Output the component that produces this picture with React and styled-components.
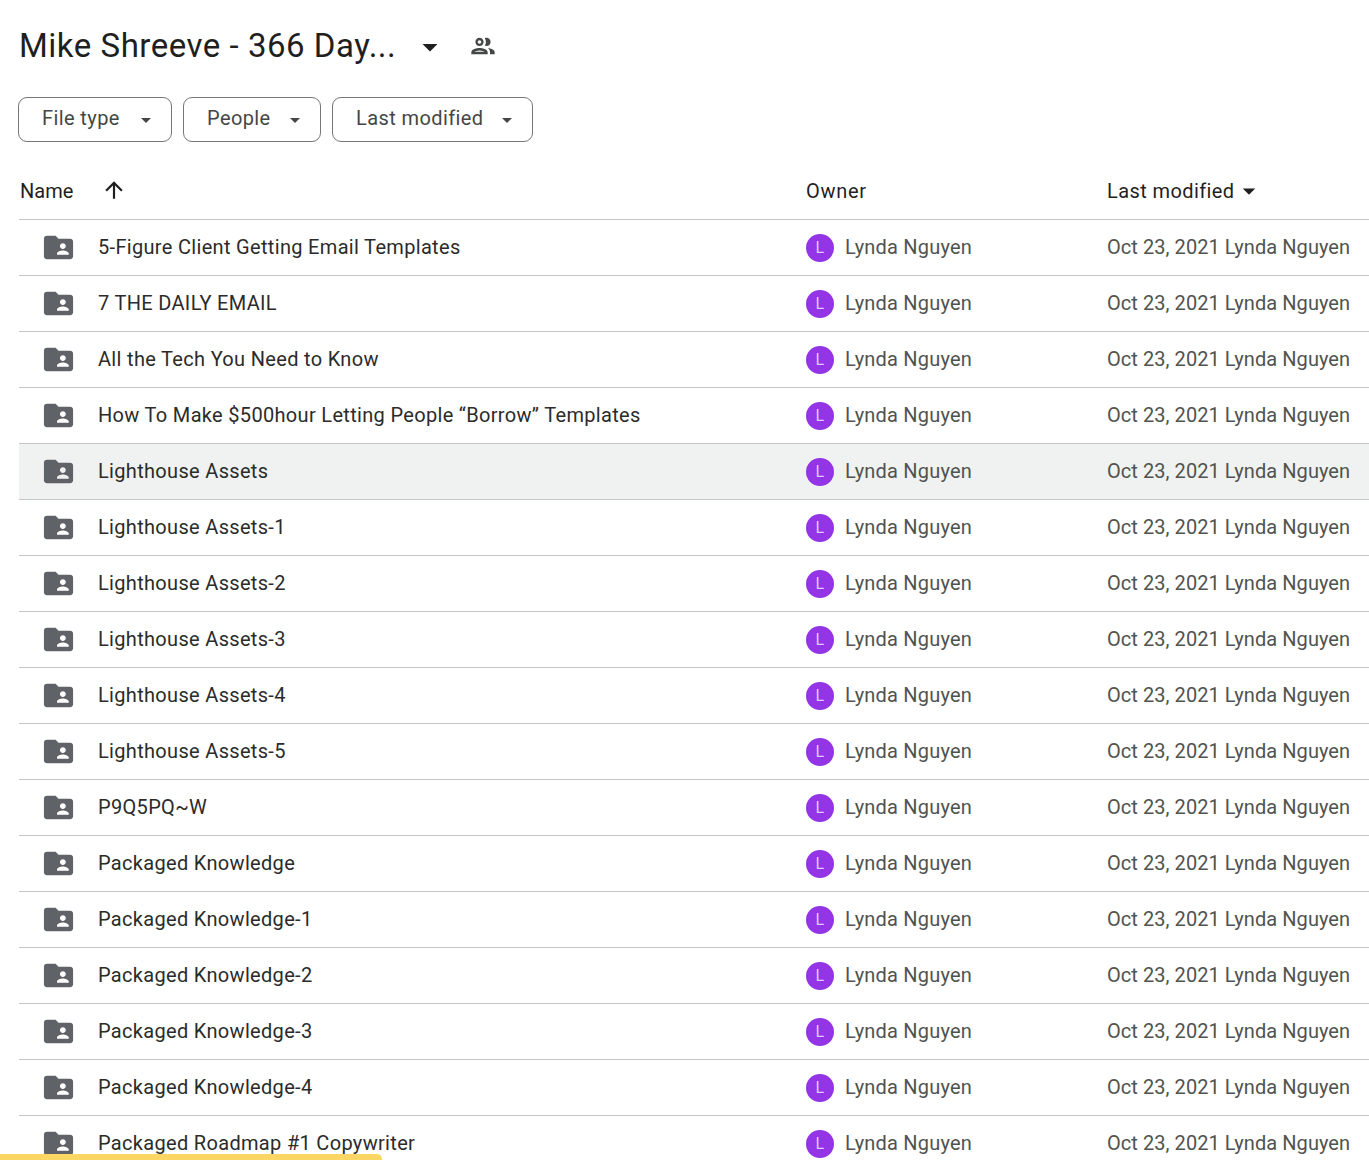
import React from 'react';
import styled, { createGlobalStyle } from 'styled-components';

const GlobalStyle = createGlobalStyle`
  html, body {
    margin: 0;
    padding: 0;
    background: #fff;
    font-family: Roboto, "Liberation Sans", sans-serif;
  }
`;

const Page = styled.div`
  position: relative;
  height: 1160px;
  overflow: hidden;
  background: #fff;
  padding-left: 19px;
  box-sizing: border-box;
`;

const TitleBar = styled.div`
  display: flex;
  align-items: center;
  height: 90px;
  color: #1f1f1f;
`;

const Title = styled.h1`
  margin: 0;
  font-size: 33px;
  font-weight: 400;
  letter-spacing: 0.52px;
  width: 389px;
  white-space: nowrap;
`;

const TitleCaret = styled.svg`
  width: 36px;
  height: 36px;
  fill: #1f1f1f;
  margin: 4px 0 0 4px;
`;

const SharedIcon = styled.svg`
  width: 28px;
  height: 28px;
  fill: #444746;
  margin: 2px 0 0 21px;
`;

const FilterRow = styled.div`
  display: flex;
  gap: 11px;
  margin-left: -1px;
  padding-top: 7px;
  height: 45px;
`;

const Filter = styled.button`
  display: flex;
  align-items: center;
  justify-content: space-between;
  box-sizing: border-box;
  width: ${(p) => p.$width}px;
  height: 45px;
  padding: 0 13px 0 23px;
  background: #fff;
  border: 1px solid #747775;
  border-radius: 9px;
  color: #444746;
  font-family: inherit;
  font-size: 20px;
`;

const FilterLabel = styled.span`
  letter-spacing: 0.4px;
  margin-bottom: 3px;
`;

const HeaderRow = styled.div`
  display: grid;
  grid-template-columns: 787px 301px 1fr;
  align-items: center;
  height: 78px;
  border-bottom: 1px solid #c7c7c7;
  box-sizing: border-box;
  color: #1f1f1f;
  font-size: 20px;
`;

const HeaderCell = styled.div`
  display: flex;
  align-items: center;
  padding-top: 21px;
  gap: ${(p) => p.$gap || 0}px;
  letter-spacing: ${(p) => p.$spacing || 0}px;
`;

const NameLabel = styled.span`
  margin-left: 1px;
`;

const SortArrow = styled.svg`
  width: 26px;
  height: 26px;
  fill: #1f1f1f;
  margin-bottom: 2px;
`;

const Row = styled.div`
  display: grid;
  grid-template-columns: 787px 301px 1fr;
  align-items: center;
  height: 56px;
  box-sizing: border-box;
  border-bottom: 1px solid #c7c7c7;
  background: ${(p) => (p.$active ? '#f0f2f1' : '#fff')};
  font-size: 20px;
  color: #50534f;
  white-space: nowrap;
`;

const NameCell = styled.div`
  display: flex;
  align-items: center;
  color: #2b2b2b;
  padding-left: 22px;
  letter-spacing: 0.32px;
`;

const FolderIcon = styled.svg`
  width: 35px;
  height: 35px;
  fill: #5f6368;
  margin-right: 22px;
  flex: none;
`;

const OwnerCell = styled.div`
  display: flex;
  align-items: center;
  gap: 11px;
  letter-spacing: 0.2px;
`;

const CellText = styled.span`
  display: block;
  margin-bottom: 2px;
  letter-spacing: ${(p) => p.$spacing ?? 'inherit'};
`;

const Avatar = styled.div`
  display: flex;
  align-items: center;
  justify-content: center;
  width: 28px;
  height: 28px;
  border-radius: 50%;
  background: #9334e6;
  color: #e3c8fa;
  font-size: 16px;
`;

const YellowBar = styled.div`
  position: absolute;
  left: 0;
  bottom: 0;
  width: 382px;
  height: 6px;
  background: #fdd663;
  border-radius: 0 5px 0 0;
`;

const Caret = ({ size = 24, color = '#444746' }) => (
  <svg width={size} height={size} viewBox="0 0 24 24" fill={color}>
    <path d="M7 10l5 5 5-5z" />
  </svg>
);

const names = [
  '5-Figure Client Getting Email Templates',
  '7 THE DAILY EMAIL',
  'All the Tech You Need to Know',
  'How To Make $500hour Letting People “Borrow” Templates',
  'Lighthouse Assets',
  'Lighthouse Assets-1',
  'Lighthouse Assets-2',
  'Lighthouse Assets-3',
  'Lighthouse Assets-4',
  'Lighthouse Assets-5',
  'P9Q5PQ~W',
  'Packaged Knowledge',
  'Packaged Knowledge-1',
  'Packaged Knowledge-2',
  'Packaged Knowledge-3',
  'Packaged Knowledge-4',
  'Packaged Roadmap #1 Copywriter',
];

const App = () => (
  <Page>
    <GlobalStyle />
    <TitleBar>
      <Title>Mike Shreeve - 366 Day...</Title>
      <TitleCaret viewBox="0 0 24 24">
        <path d="M7 10l5 5 5-5z" />
      </TitleCaret>
      <SharedIcon viewBox="0 0 24 24">
        <path d="M9 13.75c-2.34 0-7 1.17-7 3.5V19h14v-1.75c0-2.33-4.66-3.5-7-3.5zM4.34 17c.84-.58 2.87-1.25 4.66-1.25s3.82.67 4.66 1.25H4.34zM9 12c1.93 0 3.5-1.57 3.5-3.5S10.93 5 9 5 5.5 6.57 5.5 8.5 7.07 12 9 12zm0-5c.83 0 1.5.67 1.5 1.5S9.83 10 9 10s-1.5-.67-1.5-1.5S8.17 7 9 7zm7.04 6.81c1.16.84 1.96 1.96 1.96 3.44V19h4v-1.75c0-2.02-3.5-3.17-5.96-3.44zM15 12c1.93 0 3.5-1.57 3.5-3.5S16.93 5 15 5c-.54 0-1.04.13-1.5.35.63.89 1 1.98 1 3.15s-.37 2.26-1 3.15c.46.22.96.35 1.5.35z" />
      </SharedIcon>
    </TitleBar>
    <FilterRow>
      <Filter $width={154}><FilterLabel>File type</FilterLabel> <Caret /></Filter>
      <Filter $width={138}><FilterLabel>People</FilterLabel> <Caret /></Filter>
      <Filter $width={201}><FilterLabel>Last modified</FilterLabel> <Caret /></Filter>
    </FilterRow>
    <HeaderRow>
      <HeaderCell $gap={28}>
        <NameLabel>Name</NameLabel>
        <SortArrow viewBox="0 0 24 24">
          <path d="M4 12l1.41 1.41L11 7.83V20h2V7.83l5.58 5.59L20 12l-8-8-8 8z" />
        </SortArrow>
      </HeaderCell>
      <HeaderCell $spacing={0.7}>Owner</HeaderCell>
      <HeaderCell $spacing={0.4}>
        Last modified
        <Caret size={30} color="#1f1f1f" />
      </HeaderCell>
    </HeaderRow>
    {names.map((name, i) => (
      <Row key={name} $active={i === 4}>
        <NameCell>
          <FolderIcon viewBox="0 0 24 24">
            <path d="M20 6h-8l-2-2H4c-1.1 0-1.99.9-1.99 2L2 18c0 1.1.9 2 2 2h16c1.1 0 2-.9 2-2V8c0-1.1-.9-2-2-2zm-5 3c1.1 0 2 .9 2 2s-.9 2-2 2-2-.9-2-2 .9-2 2-2zm4 8h-8v-1c0-1.33 2.67-2 4-2s4 .67 4 2v1z" />
          </FolderIcon>
          <CellText>{name}</CellText>
        </NameCell>
        <OwnerCell>
          <Avatar>L</Avatar>
          <CellText>Lynda Nguyen</CellText>
        </OwnerCell>
        <CellText $spacing="0.06px">Oct 23, 2021 Lynda Nguyen</CellText>
      </Row>
    ))}
    <YellowBar />
  </Page>
);

export default App;
